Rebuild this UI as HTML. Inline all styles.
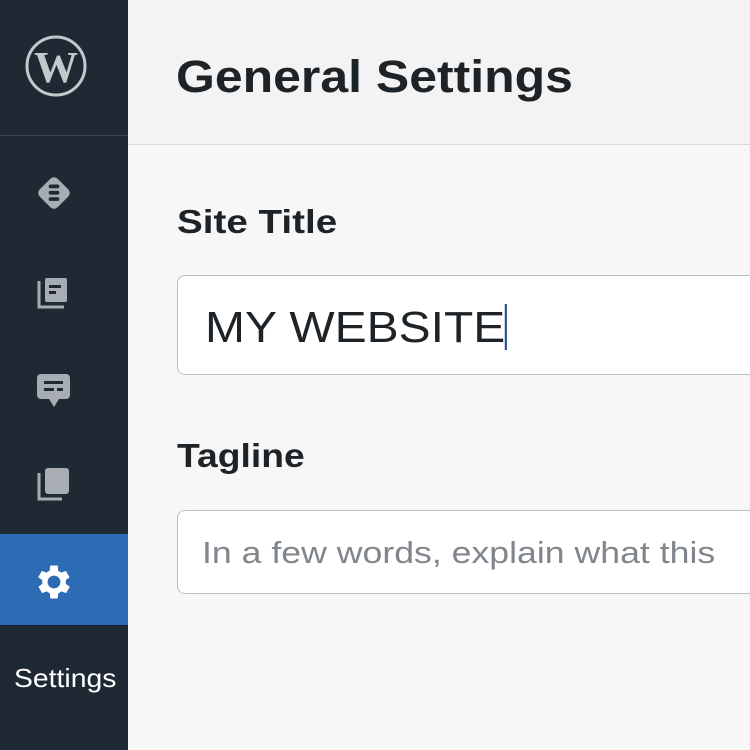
<!DOCTYPE html>
<html><head><meta charset="utf-8"><style>
*{margin:0;padding:0;box-sizing:border-box}
body{width:750px;height:750px;overflow:hidden;background:#f7f7f7;font-family:"Liberation Sans",sans-serif;position:relative}
.side{position:absolute;left:0;top:0;width:128px;height:750px;background:#1f2933}
.side .div{position:absolute;left:0;top:135px;width:128px;height:1px;background:#3a4650}
.active{position:absolute;left:0;top:534px;width:128px;height:92px;background:#2e6bb5;border-bottom:1px solid #16202a}
.ico{position:absolute}
.head{position:absolute;left:128px;top:0;width:622px;height:145px;background:#f3f3f3;border-bottom:1px solid #d8d8d8}
.s{display:inline-block;transform-origin:0 50%;white-space:nowrap}
h1{position:absolute;left:176px;top:51px;font-size:45px;font-weight:bold;color:#1d2327}
.lbl{position:absolute;left:177px;font-size:33px;font-weight:bold;color:#1d2327}
.box{position:absolute;left:177px;width:600px;background:#fff;border:1.5px solid #b9bdc1;border-radius:8px}
</style></head><body>
<div class="side">
<svg class="ico" style="left:25px;top:35px" width="62" height="62" viewBox="0 0 62 62"><circle cx="31" cy="31" r="29" fill="none" stroke="#c3c8cd" stroke-width="3"/><text x="31" y="47" text-anchor="middle" font-family="Liberation Serif" font-weight="bold" font-size="44" fill="#c3c8cd">W</text></svg>
<div class="div"></div>
<svg class="ico" style="left:35px;top:174px" width="38" height="38" viewBox="0 0 36 36"><rect x="6" y="6" width="24" height="24" rx="5" transform="rotate(45 18 18)" fill="#a7adb3"/><rect x="13" y="10" width="10" height="3.5" rx="1.5" fill="#1f2933"/><rect x="13" y="16" width="10" height="3.5" rx="1.5" fill="#1f2933"/><rect x="13" y="22" width="10" height="3.5" rx="1.5" fill="#1f2933"/></svg>
<svg class="ico" style="left:36px;top:276px" width="36" height="36" viewBox="0 0 36 36"><path d="M3 5v26h25" fill="none" stroke="#a7adb3" stroke-width="3"/><rect x="9" y="2" width="22" height="24" rx="2" fill="#a7adb3"/><rect x="13" y="9" width="12" height="3" fill="#1f2933"/><rect x="13" y="15" width="7" height="3" fill="#1f2933"/></svg>
<svg class="ico" style="left:36px;top:373px" width="36" height="36" viewBox="0 0 36 36"><rect x="1" y="1" width="33" height="25" rx="4" fill="#a7adb3"/><path d="M13 26l5 8 5-8z" fill="#a7adb3"/><rect x="8" y="8" width="19" height="3" fill="#1f2933"/><rect x="8" y="15" width="10" height="3" fill="#1f2933"/><rect x="21" y="15" width="6" height="3" fill="#1f2933"/></svg>
<svg class="ico" style="left:36px;top:466px" width="36" height="36" viewBox="0 0 36 36"><path d="M3 7v26h23" fill="none" stroke="#a7adb3" stroke-width="3"/><rect x="9" y="2" width="24" height="26" rx="3" fill="#a7adb3"/></svg>
<div class="active"></div>
<svg class="ico" style="left:32px;top:560px" width="44" height="44" viewBox="0 0 24 24"><path fill="#fff" d="M19.4 13a7.5 7.5 0 000-2l2.1-1.6-2-3.5-2.5 1a7 7 0 00-1.7-1L15 3h-4l-.4 2.9a7 7 0 00-1.7 1l-2.5-1-2 3.5L6.6 11a7.5 7.5 0 000 2l-2.1 1.6 2 3.5 2.5-1a7 7 0 001.7 1L11 21h4l.4-2.9a7 7 0 001.7-1l2.5 1 2-3.5zM13 15.5a3.5 3.5 0 110-7 3.5 3.5 0 010 7z" transform="translate(-1 0)"/></svg>
<div style="position:absolute;left:14px;top:663px;font-size:26px;color:#fff"><span class="s" style="transform:scaleX(1.09)">Settings</span></div>
</div>
<div class="head"></div>
<h1><span class="s" style="transform:scaleX(1.11)">General Settings</span></h1>
<div class="lbl" style="top:203px"><span class="s" style="transform:scaleX(1.17)">Site Title</span></div>
<div class="box" style="top:275px;height:100px"><div style="position:absolute;left:27px;top:27px;font-size:44px;color:#1d2327"><span class="s" style="transform:scaleX(1.09)">MY WEBSITE<span style="display:inline-block;width:2px;height:46px;background:#2b4d8f;vertical-align:-8px"></span></span></div></div>
<div class="lbl" style="top:437px"><span class="s" style="transform:scaleX(1.13)">Tagline</span></div>
<div class="box" style="top:510px;height:84px"><div style="position:absolute;left:24px;top:24px;font-size:31px;color:#80868c"><span class="s" style="transform:scaleX(1.15)">In a few words, explain what this</span></div></div>
</body></html>
